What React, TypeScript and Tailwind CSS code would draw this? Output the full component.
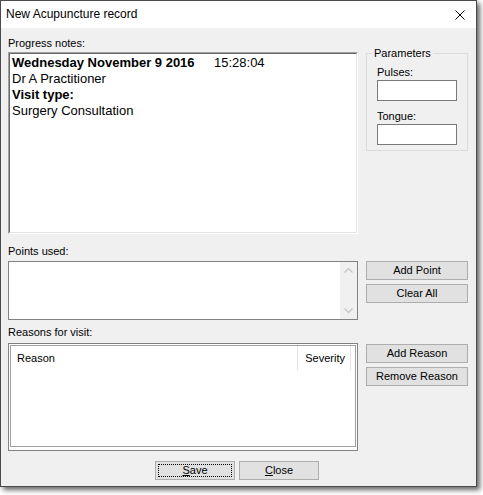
import React from "react";

function WinButton({ children, focused = false, className = "" }: { children: React.ReactNode; focused?: boolean; className?: string }) {
  return (
    <button className={`relative h-[19px] bg-[#e1e1e1] border border-[#adadad] text-[11px] leading-[13px] text-black flex items-center justify-center ${className}`}>
      {focused && <span className="absolute inset-[2px] border border-dotted border-black" />}
      {children}
    </button>
  );
}

function Chevron({ up }: { up: boolean }) {
  return (
    <svg width="9" height="5" viewBox="0 0 9 5" className="block">
      <polyline
        points={up ? "0.5,4.5 4.5,0.5 8.5,4.5" : "0.5,0.5 4.5,4.5 8.5,0.5"}
        fill="none"
        stroke="#c4c4c4"
        strokeWidth="1.2"
      />
    </svg>
  );
}

export default function App() {
  return (
    <div className="min-h-screen bg-white font-['Liberation_Sans',Arial,sans-serif] text-black">
      <div className="w-[477px] h-[487px] border border-[#4a4a4a] shadow-[3px_3px_5px_rgba(0,0,0,0.6)] flex flex-col">
        {/* title bar */}
        <div className="h-[27px] bg-white flex items-center justify-between pl-[5px] pr-[11px]">
          <span className="text-[12px] leading-[14px] mt-[-1px]">New Acupuncture record</span>
          <svg width="10" height="10" viewBox="0 0 10 10" className="block">
            <path d="M0.5 0.5 L9.5 9.5 M9.5 0.5 L0.5 9.5" stroke="#000" strokeWidth="1" />
          </svg>
        </div>

        <div className="flex-1 bg-[#f0f0f0] flex flex-col pt-[9px] text-[11px] leading-[13px]">
          {/* progress notes + parameters */}
          <div className="flex gap-[8px] pl-[7px]">
            <div className="w-[350px] flex flex-col">
              <label className="h-[13px] mb-[2px]">Progress notes:</label>
              <div className="h-[182px] border border-t-[#a0a0a0] border-l-[#a0a0a0] border-b-white border-r-white">
                <div className="h-full bg-white border border-t-[#696969] border-l-[#696969] border-b-[#e3e3e3] border-r-[#e3e3e3] pl-[2px] pt-[1px] text-[13px] leading-[16px]">
                  <div>
                    <span className="inline-block w-[202px] font-bold">Wednesday November 9 2016</span>
                    <span>15:28:04</span>
                  </div>
                  <div>Dr A Practitioner</div>
                  <div className="font-bold">Visit type:</div>
                  <div>Surgery Consultation</div>
                </div>
              </div>
            </div>
            <div className="w-[102px] mt-[16px]">
              <div className="relative h-[98px] border border-[#dcdcdc] pl-[10px] pt-[12px]">
                <span className="absolute left-[5px] top-[-7px] px-[2px] bg-[#f0f0f0]">Parameters</span>
                <div>Pulses:</div>
                <div className="mt-[1px] w-[80px] h-[21px] bg-white border border-[#7a7a7a]" />
                <div className="mt-[9px]">Tongue:</div>
                <div className="mt-[1px] w-[80px] h-[21px] bg-white border border-[#7a7a7a]" />
              </div>
            </div>
          </div>

          {/* points used */}
          <div className="flex gap-[8px] pl-[7px] mt-[11px]">
            <div className="w-[350px] flex flex-col">
              <label className="h-[13px] mb-[3px]">Points used:</label>
              <div className="h-[59px] bg-white border border-[#828282] flex justify-end">
                <div className="w-[17px] bg-[#f0f0f0] flex flex-col items-center justify-between py-[6px]">
                  <Chevron up />
                  <Chevron up={false} />
                </div>
              </div>
            </div>
            <div className="w-[102px] pt-[16px] flex flex-col gap-[4px]">
              <WinButton className="w-full">Add Point</WinButton>
              <WinButton className="w-full">Clear All</WinButton>
            </div>
          </div>

          {/* reasons for visit */}
          <div className="flex gap-[8px] pl-[7px] mt-[6px]">
            <div className="w-[350px] flex flex-col">
              <label className="h-[13px] mb-[4px]">Reasons for visit:</label>
              <div className="h-[108px] bg-white border border-[#828282] p-[1px] pb-[3px]">
                <div className="h-full border border-[#a0a0a0]">
                  <div className="h-[24px] flex">
                    <div className="flex-1 pl-[6px] flex items-center">Reason</div>
                    <div className="w-[54px] border-l border-r border-[#e5e5e5] pr-[5px] flex items-center justify-end">Severity</div>
                    <div className="w-[4px]" />
                  </div>
                </div>
              </div>
            </div>
            <div className="w-[102px] pt-[18px] flex flex-col gap-[4px]">
              <WinButton className="w-full">Add Reason</WinButton>
              <WinButton className="w-full">Remove Reason</WinButton>
            </div>
          </div>

          {/* dialog buttons */}
          <div className="mt-[10px] flex justify-center gap-[4px] pr-[3px]">
            <WinButton focused className="w-[80px]">
              <span><span className="underline">S</span>ave</span>
            </WinButton>
            <WinButton className="w-[80px]">
              <span><span className="underline">C</span>lose</span>
            </WinButton>
          </div>
        </div>
      </div>
    </div>
  );
}
